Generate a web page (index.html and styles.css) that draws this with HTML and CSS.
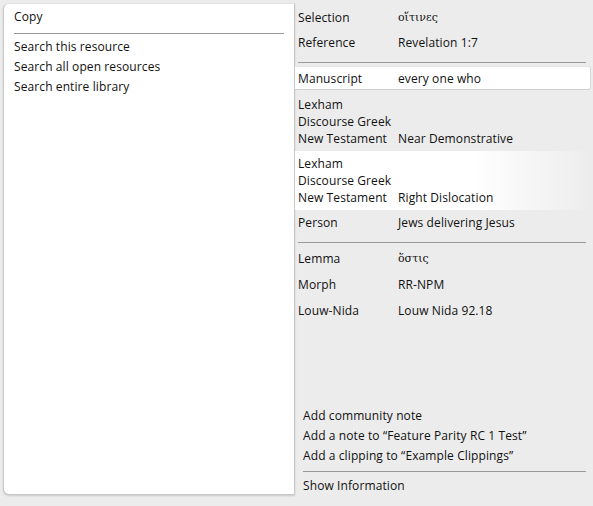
FILE: index.html
```html
<!DOCTYPE html>
<html lang="en">
<head>
    <meta charset="UTF-8">
    <title>Context Menu</title>
    <link rel="stylesheet" href="styles.css">
</head>
<body>
    <div class="menu">
        <div class="menu-item">Copy</div>
        <div class="menu-sep"></div>
        <div class="menu-item">Search this resource</div>
        <div class="menu-item">Search all open resources</div>
        <div class="menu-item">Search entire library</div>
    </div>

    <div class="info">
        <div class="row"><span class="label">Selection</span><span class="value greek">οἵτινες</span></div>
        <div class="row"><span class="label">Reference</span><span class="value">Revelation 1:7</span></div>
        <div class="sep"></div>
        <div class="row selected"><span class="label">Manuscript</span><span class="value">every one who</span></div>
        <div class="row multi first"><span class="label">Lexham<br>Discourse Greek<br>New Testament</span><span class="value">Near Demonstrative</span></div>
        <div class="row multi hover"><span class="label">Lexham<br>Discourse Greek<br>New Testament</span><span class="value">Right Dislocation</span></div>
        <div class="row"><span class="label">Person</span><span class="value">Jews delivering Jesus</span></div>
        <div class="sep"></div>
        <div class="row tall"><span class="label">Lemma</span><span class="value greek">ὅστις</span></div>
        <div class="row tall"><span class="label">Morph</span><span class="value">RR-NPM</span></div>
        <div class="row tall"><span class="label">Louw-Nida</span><span class="value">Louw Nida 92.18</span></div>

        <div class="actions">
            <div class="action">Add community note</div>
            <div class="action">Add a note to “Feature Parity RC 1 Test”</div>
            <div class="action">Add a clipping to “Example Clippings”</div>
            <div class="sep"></div>
            <div class="action">Show Information</div>
        </div>
    </div>
</body>
</html>
```

FILE: styles.css
```css
body {
    font-family: "Open Sans", "DejaVu Sans", sans-serif;
    font-size: 12px;
    letter-spacing: 0.1px;
    color: #111;
    background-color: #ececec;
    margin: 0;
    height: 506px;
    display: flex;
    overflow: hidden;
}
.menu {
    width: 270px;
    height: 490px;
    margin: 3px 0 0 3px;
    padding: 0 10px 0 10px;
    background-color: #ffffff;
    border: 1px solid #c8c8c8;
    border-top-color: #e4e4e4;
    border-radius: 6px 0 0 6px;
    box-shadow: 0 1px 2px rgba(0, 0, 0, 0.15);
    box-sizing: content-box;
}
.menu-item {
    height: 20px;
    line-height: 20px;
}
.menu-item:first-child {
    margin-top: 3px;
}
.menu-sep {
    height: 1px;
    background-color: #9a9a9a;
    margin: 6px 0 3px;
}
.info {
    flex: 1;
    display: flex;
    flex-direction: column;
    padding: 5px 0 10px;
}
.row {
    display: flex;
    height: 25px;
    line-height: 25px;
    padding-left: 3px;
}
.row.tall {
    height: 26px;
    line-height: 26px;
}
.label {
    width: 100px;
    flex-shrink: 0;
}
.greek {
    font-family: "DejaVu Serif", serif;
    font-size: 11px;
    letter-spacing: 0;
}
.sep {
    height: 1px;
    background-color: #9a9a9a;
    margin: 7px 7px 3px 3px;
}
.row.selected {
    height: 24px;
    line-height: 23px;
    margin-right: 2px;
    background-color: #ffffff;
    border-bottom: 1px solid #cfcfcf;
    border-right: 1px solid #d8d8d8;
    border-top: 1px solid #e6e6e6;
    border-radius: 0 3px 3px 0;
    box-sizing: border-box;
}
.row.multi {
    height: auto;
    line-height: 17px;
    padding-top: 4px;
    padding-bottom: 4px;
    align-items: flex-end;
}
.row.first {
    padding-top: 6px;
}
.row.hover {
    background: linear-gradient(to right, #ffffff 60%, #ececec 100%);
}
.actions {
    margin-top: auto;
    padding-left: 8px;
}
.action {
    height: 20px;
    line-height: 20px;
}
.actions .sep {
    margin: 5px 7px 4px 0;
}
```
